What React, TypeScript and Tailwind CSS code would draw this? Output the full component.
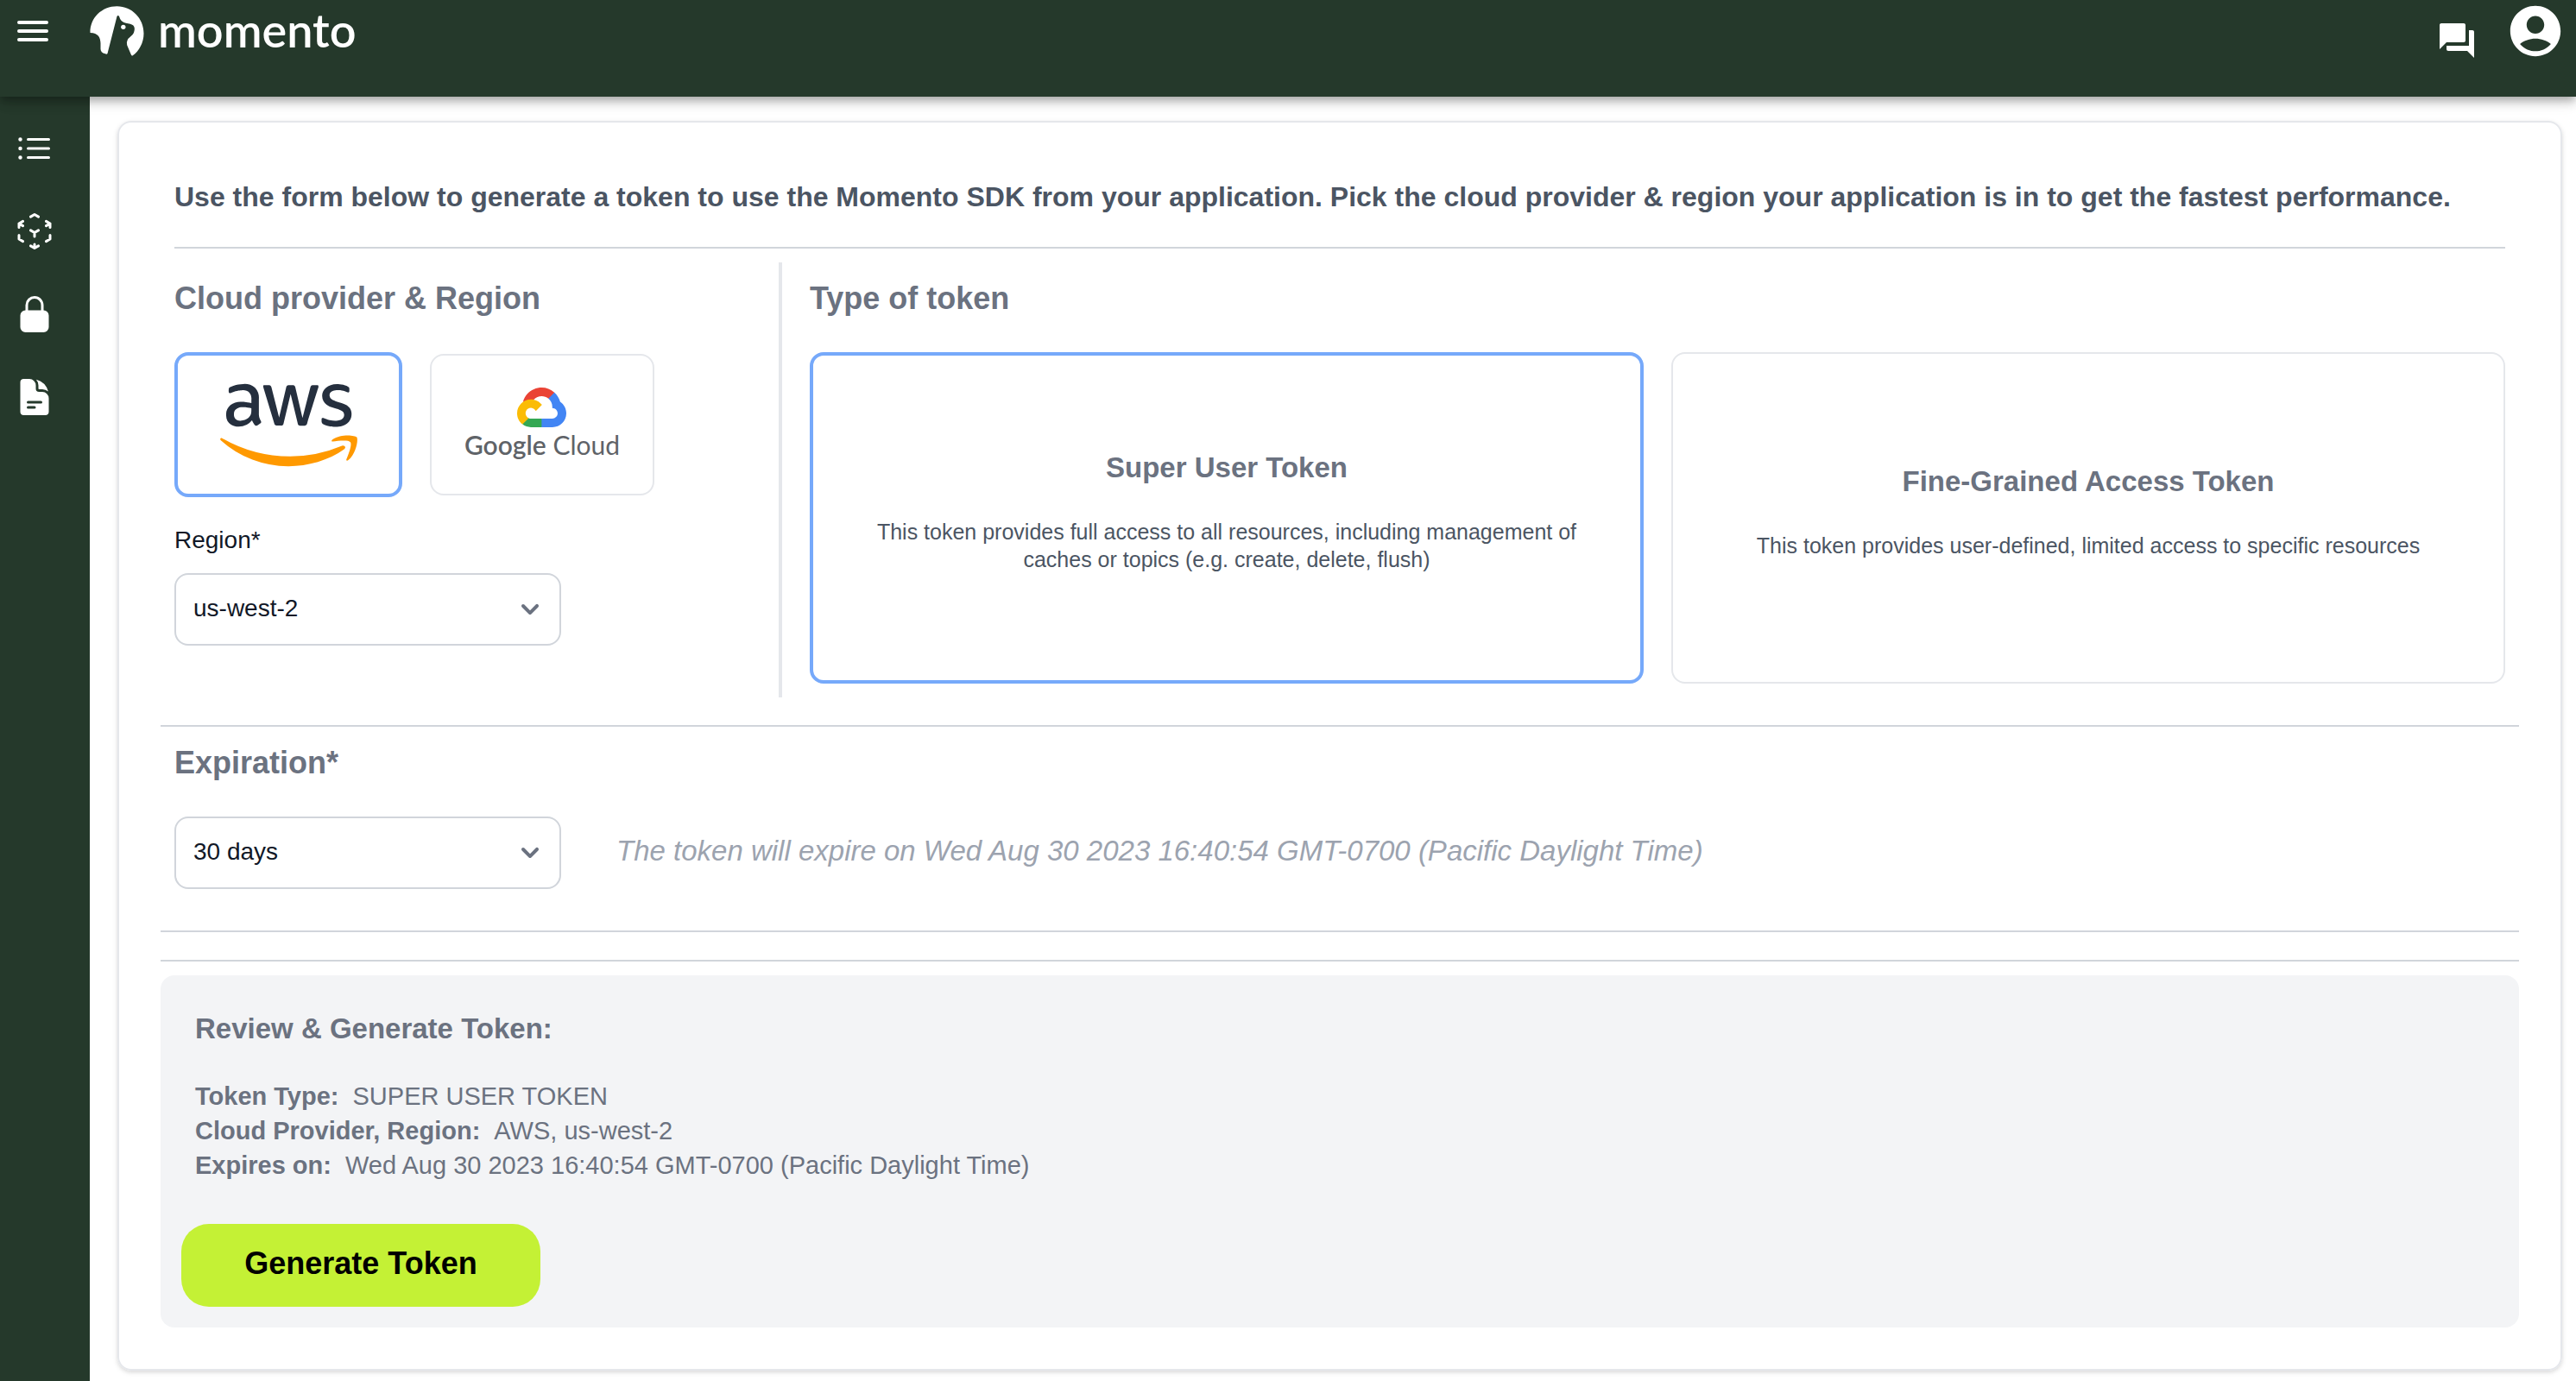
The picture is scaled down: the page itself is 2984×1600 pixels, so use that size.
import { useState } from "react";
import type { ReactNode } from "react";
import { FaAws } from "react-icons/fa";
import { HiDocumentText, HiLockClosed, HiOutlineCubeTransparent, HiOutlineListBullet } from "react-icons/hi2";
import { MdForum } from "react-icons/md";

const EXPIRY = "Wed Aug 30 2023 16:40:54 GMT-0700 (Pacific Daylight Time)";

function MenuIcon() {
  return (
    <svg viewBox="0 0 24 24" className="size-12" fill="none" stroke="currentColor" strokeWidth="2" strokeLinecap="round">
      <path d="M4 7h16M4 12h16M4 17h16" />
    </svg>
  );
}

function MomentoMark() {
  return (
    <svg viewBox="312 21 188 174" className="h-[58px] w-[63px]" fill="currentColor" aria-hidden="true">
      <path d="M313 114C312 62 354 22 406 22C458 22 499 64 499 116C499 148 483 177 461 193Q457 195 455 190L441 157Q438 148 443 138C448 129 461 125 465 112C469 99 467 90 459 86C451 82 439 82 430 78C421 74 416 67 414 58Q410 51 406 57L373 186Q371 190 365 187C354 184 349 178 349 170V150C348 130 341 115 313 114Z" />
      <circle cx="428" cy="94" r="8" />
    </svg>
  );
}

function AccountIcon() {
  return (
    <svg viewBox="0 0 24 24" className="size-[70px]" fill="currentColor" aria-hidden="true">
      <path d="M12 2C6.48 2 2 6.48 2 12s4.48 10 10 10 10-4.48 10-10S17.52 2 12 2zm0 4c1.93 0 3.5 1.57 3.5 3.5S13.93 13 12 13s-3.5-1.57-3.5-3.5S10.07 6 12 6zm0 14c-2.03 0-4.43-.82-6.14-2.88C7.55 15.8 9.68 15 12 15s4.45.8 6.14 2.12C16.43 19.18 14.03 20 12 20z" />
    </svg>
  );
}

function AwsLogo() {
  return (
    <>
      <svg className="absolute size-0" aria-hidden="true">
        <defs>
          <linearGradient id="aws-colors" x1="0" y1="0" x2="0" y2="1">
            <stop offset="0.57" stopColor="#252f3e" />
            <stop offset="0.57" stopColor="#ff9900" />
          </linearGradient>
        </defs>
      </svg>
      <FaAws fill="url(#aws-colors)" className="h-[127px] w-[159px]" aria-hidden="true" />
    </>
  );
}

function GoogleCloudLogo() {
  return (
    <span className="flex flex-col items-center">
      <svg viewBox="0 0 256 206" className="h-[46px] w-[57px]" aria-hidden="true">
        <path fill="#EA4335" d="M170.2517 56.8186L192.5047 34.5656L193.9877 25.1956C153.4367-11.6774 88.9757-7.4964 52.4207 33.9196C42.2667 45.4226 34.7337 59.7636 30.7167 74.5726L38.6867 73.4496L83.1917 66.1106L86.6277 62.5966C106.4247 40.8546 139.8977 37.9296 162.7557 56.4286Z" />
        <path fill="#4285F4" d="M224.2048 73.9182C219.0898 55.0822 208.5888 38.1492 193.9878 25.1962L162.7558 56.4282C175.9438 67.2042 183.4568 83.4382 183.1348 100.4652V106.0092C198.4858 106.0092 210.9318 118.4542 210.9318 133.8052C210.9318 149.1572 198.4858 161.2902 183.1348 161.2902H127.4638L121.9978 167.2242V200.5642L127.4638 205.7952H183.1348C223.0648 206.1062 255.6868 174.3012 255.9978 134.3712C256.1858 110.1682 244.2528 87.4782 224.2048 73.9182" />
        <path fill="#34A853" d="M71.8704 205.7957H127.4634V161.2897H71.8704C67.9094 161.2887 64.0734 160.4377 60.4714 158.7917L52.5844 161.2117L30.1754 183.4647L28.2234 191.0387C40.7904 200.5277 56.1234 205.8637 71.8704 205.7957" />
        <path fill="#FBBC05" d="M71.8704 61.4255C31.9394 61.6635-.2366 94.2275.0014 134.1575C.1344 156.4555 10.5484 177.4455 28.2234 191.0385L60.4714 158.7915C46.4804 152.4705 40.2634 136.0055 46.5844 122.0155C52.9044 108.0255 69.3704 101.8085 83.3594 108.1285C89.5244 110.9135 94.4614 115.8515 97.2464 122.0155L129.4944 89.7685C115.7734 71.8315 94.4534 61.3445 71.8704 61.4255" />
      </svg>
      <span className="font-[Lato,sans-serif] text-[30px] leading-10 text-[#5f6368]">
        <span className="font-semibold">Google</span> Cloud
      </span>
    </span>
  );
}

function Select({ id, label, value, options, onChange }: { id: string; label?: string; value: string; options: string[]; onChange: (v: string) => void }) {
  return (
    <div className="relative w-[448px]">
      <select
        id={id}
        aria-label={label}
        value={value}
        onChange={(e) => onChange(e.target.value)}
        className="h-21 w-full appearance-none rounded-2xl border-2 border-[#d1d5db] bg-white px-5 pb-0.5 text-[28px] text-[#111827]"
      >
        {options.map((o) => (
          <option key={o}>{o}</option>
        ))}
      </select>
      <svg viewBox="0 0 20 20" className="pointer-events-none absolute top-1/2 right-4 size-10 -translate-y-1/2 text-[#6b7280]" fill="currentColor" aria-hidden="true">
        <path fillRule="evenodd" d="M5.293 7.293a1 1 0 0 1 1.414 0L10 10.586l3.293-3.293a1 1 0 1 1 1.414 1.414l-4 4a1 1 0 0 1-1.414 0l-4-4a1 1 0 0 1 0-1.414z" />
      </svg>
    </div>
  );
}

function Provider({ name, selected, onClick, children }: { name: string; selected: boolean; onClick: () => void; children: ReactNode }) {
  return (
    <button
      type="button"
      aria-label={name}
      aria-pressed={selected}
      onClick={onClick}
      className={
        selected
          ? "flex h-42 w-66 items-center justify-center rounded-2xl border-4 border-[#76a9fa]"
          : "flex h-41 w-65 items-center justify-center rounded-2xl border-2 border-[#e5e7eb]"
      }
    >
      {children}
    </button>
  );
}

function TokenType({ title, text, selected, onClick }: { title: string; text: string; selected: boolean; onClick: () => void }) {
  return (
    <button
      type="button"
      aria-pressed={selected}
      onClick={onClick}
      className={
        selected
          ? "flex h-96 flex-col items-center justify-center rounded-2xl border-4 border-[#76a9fa] px-16 pb-4"
          : "flex h-96 flex-col items-center justify-center rounded-2xl border-2 border-[#e5e7eb] px-16 pb-4"
      }
    >
      <span className="text-[33px] leading-11 font-bold text-[#6b7280]">{title}</span>
      <span className="mt-9 text-[25px] leading-8 text-[#4b5563]">{text}</span>
    </button>
  );
}

function Heading({ children }: { children: ReactNode }) {
  return <h2 className="text-4xl leading-13 font-bold text-[#6b7280]">{children}</h2>;
}

function SummaryRow({ label, value }: { label: string; value: string }) {
  return (
    <div className="flex gap-4">
      <dt className="font-bold">{label}</dt>
      <dd>{value}</dd>
    </div>
  );
}

const NAV = [
  { label: "Caches", Icon: HiOutlineListBullet },
  { label: "Topics", Icon: HiOutlineCubeTransparent },
  { label: "Tokens", Icon: HiLockClosed },
  { label: "Documentation", Icon: HiDocumentText },
];

export default function App() {
  const [provider, setProvider] = useState("AWS");
  const [region, setRegion] = useState("us-west-2");
  const [tokenType, setTokenType] = useState("Super User Token");
  const [expiration, setExpiration] = useState("30 days");

  return (
    <div className="flex min-h-screen flex-col bg-white font-['Liberation_Sans',Arial,sans-serif]">
      <header className="relative z-10 flex h-28 items-start justify-between bg-[#25392b] pr-3 pl-3.5 text-white shadow-[0_4px_8px_-2px_rgba(0,0,0,0.2),0_8px_10px_0_rgba(0,0,0,0.14),0_2px_20px_0_rgba(0,0,0,0.12)]">
        <div className="flex items-start gap-10.5">
          <button type="button" aria-label="Toggle navigation" className="mt-3">
            <MenuIcon />
          </button>
          <a href="#home" className="flex items-start gap-4 pt-[7px]">
            <MomentoMark />
            <span className="font-[Lato,sans-serif] text-[54px] leading-14 font-semibold">momento</span>
          </a>
        </div>
        <div className="flex items-start gap-8">
          <button type="button" aria-label="Chat" className="mt-[23px]">
            <MdForum className="size-12" />
          </button>
          <button type="button" aria-label="Account" className="mt-px">
            <AccountIcon />
          </button>
        </div>
      </header>

      <div className="flex flex-1">
        <aside className="w-26 shrink-0 bg-[#25392b] text-white">
          <nav className="flex flex-col gap-12 pt-9 pl-4">
            {NAV.map(({ label, Icon }) => (
              <a key={label} href={"#" + label.toLowerCase()} aria-label={label} className="w-12">
                <Icon className="size-12" />
              </a>
            ))}
          </nav>
        </aside>

        <main className="min-w-0 flex-1 pt-7 pr-4 pb-3 pl-8">
          <div className="rounded-2xl border-2 border-[#e5e7eb] px-12 pt-16 pb-12 shadow-[0_2px_6px_0_rgba(0,0,0,0.1),0_2px_4px_0_rgba(0,0,0,0.06)]">
            <div className="px-4">
              <h1 className="text-[32px] leading-11 font-bold text-[#4b5563]">
                Use the form below to generate a token to use the Momento SDK from your application. Pick the cloud provider &amp; region your application is in to get the fastest performance.
              </h1>
              <hr className="mt-9 border-t-2 border-[#d1d5db]" />

              <div className="mt-4 flex">
                <section className="w-[704px] shrink-0 border-r-4 border-[#e5e7eb] py-4">
                  <Heading>Cloud provider &amp; Region</Heading>
                  <div className="mt-9 flex items-center gap-8">
                    <Provider name="AWS" selected={provider === "AWS"} onClick={() => setProvider("AWS")}>
                      <AwsLogo />
                    </Provider>
                    <Provider name="Google Cloud" selected={provider === "GCP"} onClick={() => setProvider("GCP")}>
                      <GoogleCloudLogo />
                    </Provider>
                  </div>
                  <label htmlFor="region" className="mt-8 mb-5 block text-[28px] leading-9 text-[#111827]">
                    Region*
                  </label>
                  <Select id="region" value={region} options={["us-west-2", "us-east-1"]} onChange={setRegion} />
                </section>

                <section className="flex-1 py-4 pl-8">
                  <Heading>Type of token</Heading>
                  <div className="mt-9 grid grid-cols-2 gap-8">
                    <TokenType
                      title="Super User Token"
                      text="This token provides full access to all resources, including management of caches or topics (e.g. create, delete, flush)"
                      selected={tokenType === "Super User Token"}
                      onClick={() => setTokenType("Super User Token")}
                    />
                    <TokenType
                      title="Fine-Grained Access Token"
                      text="This token provides user-defined, limited access to specific resources"
                      selected={tokenType === "Fine-Grained Access Token"}
                      onClick={() => setTokenType("Fine-Grained Access Token")}
                    />
                  </div>
                </section>
              </div>
            </div>

            <hr className="mt-8 border-t-2 border-[#d1d5db]" />
            <section className="mt-4 px-4">
              <Heading>Expiration*</Heading>
              <div className="mt-9 flex items-center gap-16">
                <Select id="expiration" label="Expiration" value={expiration} options={["30 days", "60 days"]} onChange={setExpiration} />
                <p className="pb-1 text-[33px] leading-11 text-[#9ca3af] italic">The token will expire on {EXPIRY}</p>
              </div>
            </section>
            <hr className="mt-12 border-t-2 border-[#d1d5db]" />
            <hr className="mt-8 border-t-2 border-[#d1d5db]" />

            <section className="mt-4 rounded-2xl bg-[#f3f4f6] px-6 pt-10 pb-6 text-[#6b7280]">
              <h2 className="ml-4 text-[33px] leading-11 font-bold">Review &amp; Generate Token:</h2>
              <dl className="mt-9 ml-4 text-[29px] leading-10">
                <SummaryRow label="Token Type:" value="SUPER USER TOKEN" />
                <SummaryRow label="Cloud Provider, Region:" value={`${provider}, ${region}`} />
                <SummaryRow label="Expires on:" value={EXPIRY} />
              </dl>
              <button type="button" className="mt-12 h-24 w-104 rounded-4xl bg-[#c4f135] pb-1 text-4xl font-bold text-black">
                Generate Token
              </button>
            </section>
          </div>
        </main>
      </div>
    </div>
  );
}
